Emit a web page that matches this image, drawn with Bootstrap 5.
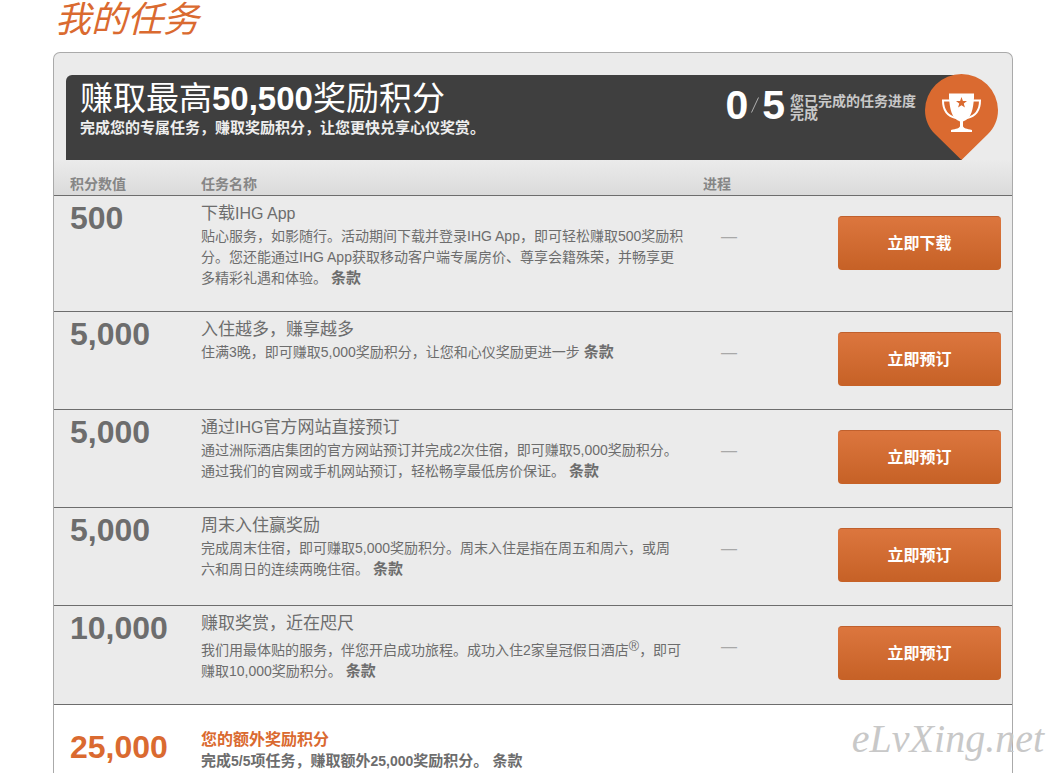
<!DOCTYPE html>
<html lang="zh-CN">
<head>
<meta charset="utf-8">
<meta name="viewport" content="width=device-width, initial-scale=1">
<title>我的任务</title>
<link href="https://cdn.jsdelivr.net/npm/bootstrap@5.3.0/dist/css/bootstrap.min.css" rel="stylesheet">
<style>
  :root { --ink: #6d6d6d; --brand: #da6a30; --panel: #ebebeb; }
  body { font-family: "Liberation Sans", "Noto Sans CJK SC", sans-serif; font-size: 14px; line-height: 21px; color: var(--ink); background: #fff; }
  .page { padding: 0 43px 0 53px; }
  .page-title { font-size: 36px; line-height: 40px; font-style: italic; font-weight: 400; color: var(--brand); margin: 0 0 12px; padding-left: 2px; }
  .panel { border: 1px solid #aaa; border-bottom: 0; border-radius: 7px 7px 0 0; background: linear-gradient(var(--panel) 0 200px, #fff 200px); }
  .banner { background: #3f3f3f; color: #fff; min-height: 85px; margin: 22px 50px 0 12px; padding: 5px 46px 0 14px; border-radius: 6px 0 0 0; }
  .banner h2 { font-size: 33px; line-height: 38px; font-weight: 400; margin: 0; }
  .banner-note { font-size: 15px; line-height: 20px; font-weight: 700; color: #eee; margin: 0; }
  .count { font-size: 41px; line-height: 50px; font-weight: 700; }
  .slash { width: 8px; height: 16px; margin: 0 3px; }
  .count-note { font-size: 14px; line-height: 13px; font-weight: 700; color: #c8c8c8; margin: 6px 0 0 5px; }
  .pin { right: -36px; top: -1px; width: 73px; height: 86px; }
  .missions { table-layout: fixed; margin: 0; line-height: 21px; --bs-table-bg: var(--panel); --bs-table-color: var(--ink); color: var(--ink); }
  .missions > :not(caption) > * > * { padding: 0; border-bottom: 1px solid #6d6d6d; vertical-align: top; box-shadow: none; color: inherit; }
  .missions thead tr { background: linear-gradient(#ebebeb, #dadada); }
  .missions thead th { background: transparent; font-size: 14px; color: #868686; padding-top: 14px; }
  .col-points { width: 147px; }
  .col-progress { width: 135px; }
  .col-action { width: 174px; }
  .missions > :not(caption) > * > :first-child { padding-left: 16px; }
  .missions tbody th { font-size: 32px; line-height: 44px; font-weight: 700; }
  .missions .detail { padding: 8px 17px 22px 0; }
  .detail h3 { font-size: 17px; line-height: 20px; font-weight: 400; margin: 0 0 2px; }
  .latin { font-size: 16px; }
  .detail p { margin: 0; }
  .detail a { color: inherit; font-size: 15px; font-weight: 700; text-decoration: none; line-height: 1; }
  .detail sup { position: static; font-size: 14px; line-height: 21px; vertical-align: 4px; }
  .missions .progress-cell { padding: 30px 0 0 18px; color: #a8a8a8; font-size: 16px; }
  .missions .action { padding: 20px 11px 23px 0; }
  .btn-go { height: 54px; border: 0; border-top: 1px solid #c0602d; border-radius: 4px; background: linear-gradient(#dc763e, #c66126); color: #fff; font-size: 16px; line-height: 24px; font-weight: 700; }
  .btn-go:hover { color: #fff; background: #c66126; }
  .missions .bonus > * { background: #fff; border: 0; }
  .missions .bonus th { color: var(--brand); padding-top: 20px; }
  .missions .bonus .detail { padding: 25px 0 0; font-size: 15px; font-weight: 700; }
  .bonus .detail h3 { font-size: 16px; line-height: 20px; font-weight: 700; color: var(--brand); margin: 0; }
  .bonus .latin { font-size: 14px; }
  .watermark { right: 12px; top: 716px; font: italic 40px/46px "Liberation Serif", serif; color: #c8c8c8; pointer-events: none; }
</style>
</head>
<body>
<main class="page d-flex flex-column min-vh-100">
  <h1 class="page-title">我的任务</h1>
  <section class="panel flex-grow-1">
    <header class="banner position-relative d-flex justify-content-between">
      <div>
        <h2>赚取最高<strong>50,500</strong>奖励积分</h2>
        <p class="banner-note">完成您的专属任务，赚取奖励积分，让您更快兑享心仪奖赏。</p>
      </div>
      <div class="d-flex align-items-center align-self-start">
        <span class="count">0</span>
        <svg class="slash" viewBox="0 0 8 16" aria-hidden="true"><path d="M7.500 0.500L0.500 15.500" stroke="#b0b0b0"/></svg>
        <span class="count">5</span>
        <p class="count-note">您已完成的任务进度<br>完成</p>
      </div>
      <svg class="pin position-absolute" viewBox="0 0 73 86" aria-hidden="true">
        <path fill="#da6a30" d="M36.500 0A36.500 36.500 0 0 1 73 36C73 46 69 54 63 60L36.500 86L10 60C4 54 0 46 0 36A36.500 36.500 0 0 1 36.500 0Z"/>
        <path fill="none" stroke="#fff" stroke-width="2" d="M26 26.500H18C18 36 22 42 31 44M47 26.500H55C55 36 51 42 42 44"/>
        <path fill="#fff" d="M24 19.500H49V24C48 35 47 44 38 47.500V52C38 54 42 55 47 56V58H26V56C31 55 35 54 35 52V47.500C26 44 25 35 24 24Z"/>
        <path fill="#da6a30" d="M36.500 23L37.900 26.900L42 27L38.800 29.500L39.900 33.500L36.500 31.200L33.100 33.500L34.200 29.500L31 27L35.100 26.900Z"/>
      </svg>
    </header>
    <table class="table missions">
      <colgroup><col class="col-points"><col><col class="col-progress"><col class="col-action"></colgroup>
      <thead>
        <tr><th scope="col">积分数值</th><th scope="col">任务名称</th><th scope="col">进程</th><th></th></tr>
      </thead>
      <tbody>
        <tr>
          <th scope="row">500</th>
          <td class="detail"><h3>下载<span class="latin">IHG App</span></h3>
            <p>贴心服务，如影随行。活动期间下载并登录IHG App，即可轻松赚取500奖励积分。您还能通过IHG App获取移动客户端专属房价、尊享会籍殊荣，并畅享更多精彩礼遇和体验。 <a href="#">条款</a></p></td>
          <td class="progress-cell">—</td>
          <td class="action"><button type="button" class="btn btn-go w-100">立即下载</button></td>
        </tr>
        <tr>
          <th scope="row">5,000</th>
          <td class="detail"><h3>入住越多，赚享越多</h3>
            <p>住满3晚，即可赚取5,000奖励积分，让您和心仪奖励更进一步 <a href="#">条款</a></p></td>
          <td class="progress-cell">—</td>
          <td class="action"><button type="button" class="btn btn-go w-100">立即预订</button></td>
        </tr>
        <tr>
          <th scope="row">5,000</th>
          <td class="detail"><h3>通过<span class="latin">IHG</span>官方网站直接预订</h3>
            <p>通过洲际酒店集团的官方网站预订并完成2次住宿，即可赚取5,000奖励积分。<br>通过我们的官网或手机网站预订，轻松畅享最低房价保证。 <a href="#">条款</a></p></td>
          <td class="progress-cell">—</td>
          <td class="action"><button type="button" class="btn btn-go w-100">立即预订</button></td>
        </tr>
        <tr>
          <th scope="row">5,000</th>
          <td class="detail"><h3>周末入住赢奖励</h3>
            <p>完成周末住宿，即可赚取5,000奖励积分。周末入住是指在周五和周六，或周<br>六和周日的连续两晚住宿。 <a href="#">条款</a></p></td>
          <td class="progress-cell">—</td>
          <td class="action"><button type="button" class="btn btn-go w-100">立即预订</button></td>
        </tr>
        <tr>
          <th scope="row">10,000</th>
          <td class="detail"><h3>赚取奖赏，近在咫尺</h3>
            <p>我们用最体贴的服务，伴您开启成功旅程。成功入住2家皇冠假日酒店<sup>®</sup>，即可赚取10,000奖励积分。 <a href="#">条款</a></p></td>
          <td class="progress-cell">—</td>
          <td class="action"><button type="button" class="btn btn-go w-100">立即预订</button></td>
        </tr>
        <tr class="bonus">
          <th scope="row">25,000</th>
          <td class="detail" colspan="3"><h3>您的额外奖励积分</h3>
            <p>完成<span class="latin">5/5</span>项任务，赚取额外<span class="latin">25,000</span>奖励积分。 <a href="#">条款</a></p></td>
        </tr>
      </tbody>
    </table>
  </section>
</main>
<div class="watermark position-absolute">eLvXing.net</div>
<script src="https://cdn.jsdelivr.net/npm/bootstrap@5.3.0/dist/js/bootstrap.bundle.min.js"></script>
</body>
</html>
